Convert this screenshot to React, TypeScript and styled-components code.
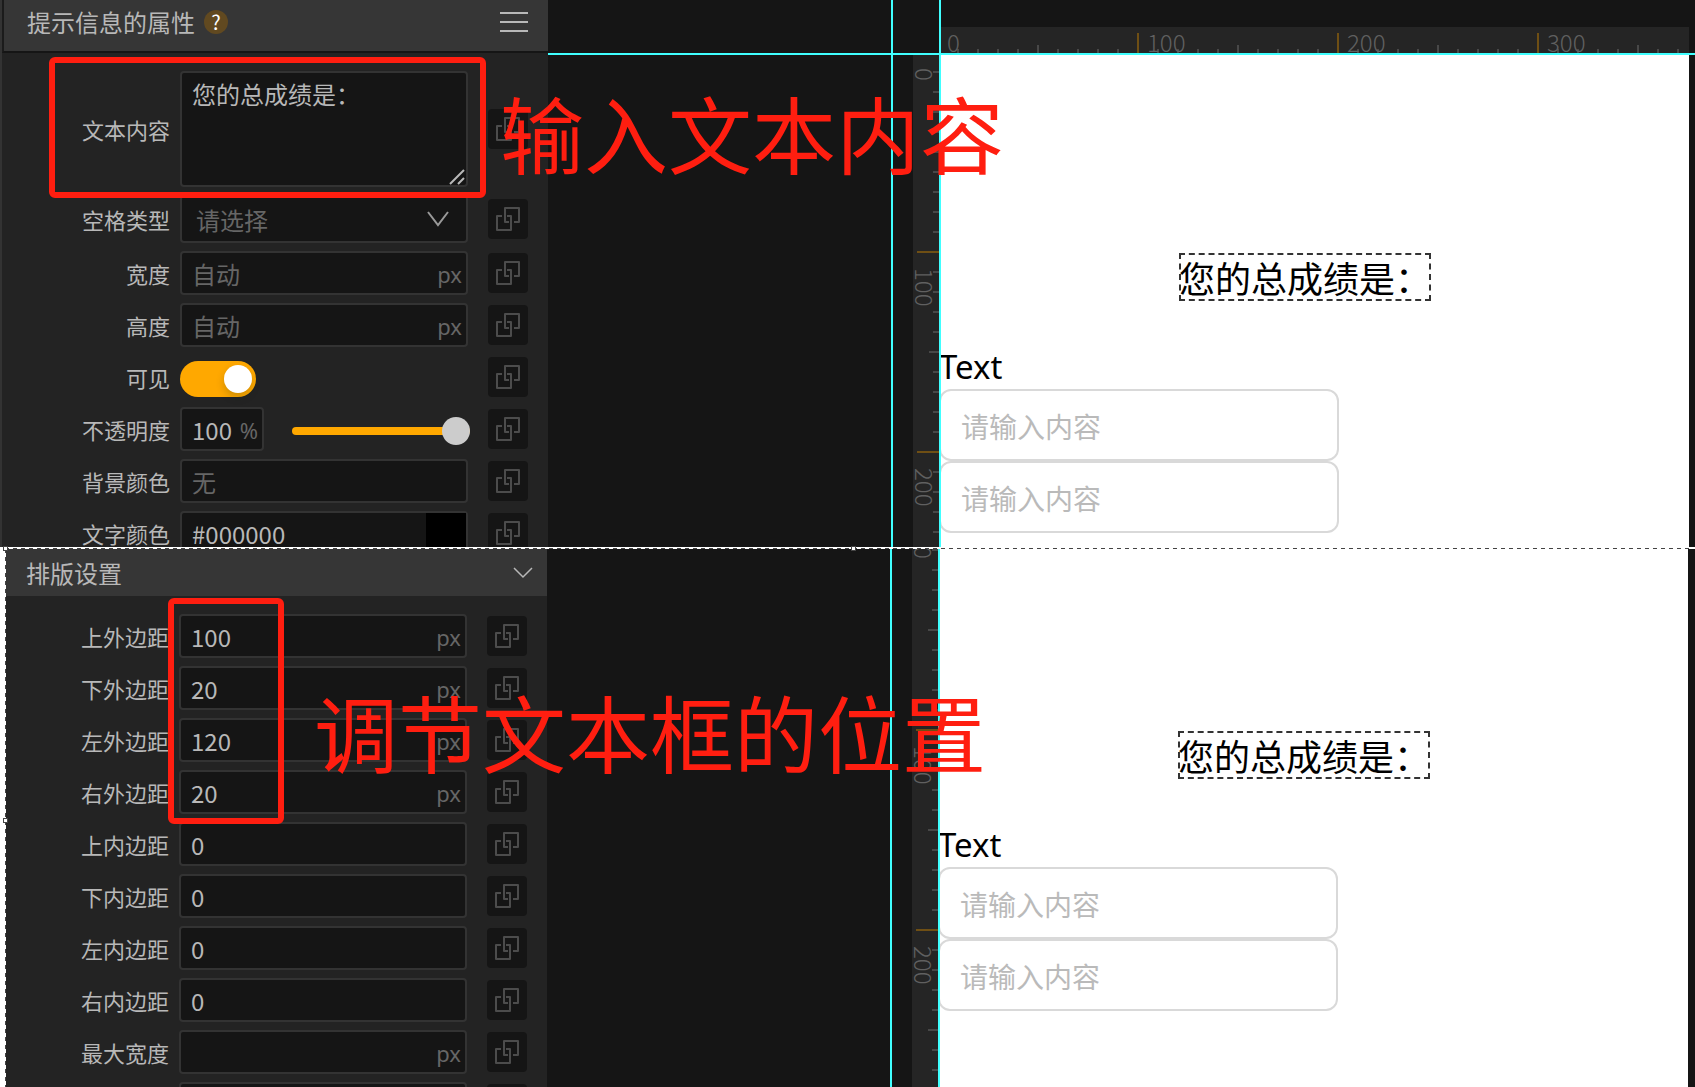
import React from "react";
import styled, { createGlobalStyle } from "styled-components";

const CJK = `"Noto Sans CJK SC", "Noto Sans", sans-serif`;
const LATIN = `"Noto Sans", "Noto Sans CJK SC", sans-serif`;

const GlobalStyle = createGlobalStyle`
  *, *::before, *::after { box-sizing: border-box; }
  html, body { margin: 0; background: #fff; }
  body, input, textarea, select, button { font-family: ${CJK}; }
`;

const Page = styled.main`
  position: relative;
  display: flex;
  flex-direction: column;
  height: 100vh;
  overflow: hidden;
`;

const Shot = styled.section<{ $height?: number }>`
  display: flex;
  flex: ${(p) => (p.$height ? `0 0 ${p.$height}px` : "1 1 0")};
  min-height: 0;
  overflow: hidden;
`;

/* ---------- property panel ---------- */

const Sidebar = styled.aside<{ $cropped?: boolean }>`
  flex: 0 0 ${(p) => (p.$cropped ? 547 : 548)}px;
  display: flex;
  padding-left: ${(p) => (p.$cropped ? 5 : 2)}px;
  background: ${(p) => (p.$cropped ? "#fff" : "#333")};
`;

const CropEdge = styled.div`
  flex: 0 0 1px;
  background: repeating-linear-gradient(to bottom, #444 0 4px, #fff 4px 8px);
`;

const PanelColumn = styled.div`
  flex: 1;
  min-width: 0;
  background: #232323;
`;

const PanelHeader = styled.header<{ $compact?: boolean }>`
  display: flex;
  align-items: center;
  gap: 9px;
  height: ${(p) => (p.$compact ? 47 : 53)}px;
  padding: ${(p) => (p.$compact ? "0 14px 0 20px" : "0 20px 8px 23px")};
  border-left: ${(p) => (p.$compact ? "0" : "2px solid #1b1b1b")};
  border-bottom: ${(p) => (p.$compact ? "0" : "2px solid #151515")};
  background: #363636;
`;

const PanelTitle = styled.h2`
  margin: 0;
  font-size: 24px;
  line-height: 32px;
  font-weight: 400;
  color: #b8b8b8;
`;

const HelpButton = styled.button`
  width: 24px;
  height: 24px;
  padding: 0;
  border: 0;
  border-radius: 50%;
  background: #614920;
  color: #fff;
  font-size: 20px;
  line-height: 24px;
`;

const HeaderButton = styled.button`
  display: flex;
  margin-left: auto;
  padding: 0;
  border: 0;
  background: none;
  color: #b8b8b8;
`;

const PanelBody = styled.div`
  display: flex;
  flex-direction: column;
  gap: 8px;
  padding: 18px 20px 0 0;
`;

const Row = styled.div`
  display: flex;
  align-items: center;
  min-height: 44px;
`;

const RowLabel = styled.label`
  flex: 1;
  min-width: 0;
  padding-right: 10px;
  text-align: right;
  white-space: nowrap;
  font-size: 22px;
  line-height: 32px;
  color: #b8b8b8;
`;

const Control = styled.div`
  display: flex;
  align-items: center;
  flex: 0 0 288px;
  width: 288px;
  min-width: 0;
  margin-right: 20px;
`;

const FieldBox = styled.div<{ $narrow?: boolean; $height?: number }>`
  position: relative;
  display: flex;
  align-items: center;
  flex: ${(p) => (p.$narrow ? "0 0 84px" : "1 1 0")};
  min-width: 0;
  height: ${(p) => p.$height ?? 44}px;
  border: 2px solid #333;
  border-radius: 4px;
  background: #151515;
  color: #666;
`;

const TextField = styled.input`
  flex: 1 1 0;
  width: 0;
  min-width: 0;
  height: 40px;
  padding: 0 0 0 10px;
  border: 0;
  outline: 0;
  background: none;
  font-size: 24px;
  color: #b8b8b8;
  &::placeholder { color: #666; opacity: 1; }
`;

const Unit = styled.span`
  padding: 2px 4px 0 0;
  font-family: ${LATIN};
  font-size: 22px;
  line-height: 32px;
`;

const TextBlock = styled.textarea`
  display: block;
  flex: 1 1 0;
  width: 0;
  min-width: 0;
  height: 112px;
  padding: 5px 10px;
  border: 0;
  outline: 0;
  resize: none;
  background: none;
  font-size: 24px;
  line-height: 32px;
  color: #b8b8b8;
`;

const ResizeGrip = styled.svg`
  position: absolute;
  right: 1px;
  bottom: 0;
`;

const SelectField = styled.select`
  flex: 1;
  height: 40px;
  padding: 0 14px;
  border: 0;
  outline: 0;
  appearance: none;
  background: none;
  font-size: 24px;
  color: #666;
`;

const SelectArrow = styled.svg`
  position: absolute;
  right: 17px;
  pointer-events: none;
`;

const Switch = styled.input`
  appearance: none;
  display: flex;
  align-items: center;
  justify-content: flex-end;
  width: 76px;
  height: 36px;
  margin: 4px 0 0;
  padding: 4px;
  border-radius: 18px;
  background: #ffa800;
  &::before {
    content: "";
    width: 28px;
    height: 28px;
    border-radius: 50%;
    background: #fff;
    box-shadow: 0 4px 8px rgba(0, 35, 11, 0.2);
  }
`;

const Slider = styled.input`
  appearance: none;
  flex: 0 0 178px;
  height: 28px;
  margin: 4px 0 0 28px;
  background: none;
  &::-webkit-slider-runnable-track {
    height: 8px;
    border-radius: 4px;
    background: #ffa800;
  }
  &::-webkit-slider-thumb {
    appearance: none;
    width: 28px;
    height: 28px;
    margin-top: -10px;
    border-radius: 50%;
    background: #ccc;
  }
`;

const Swatch = styled.button`
  flex: 0 0 40px;
  height: 40px;
  padding: 0;
  border: 0;
  background: #000;
`;

const LinkButton = styled.button`
  flex: 0 0 40px;
  height: 40px;
  padding: 0;
  border: 0;
  border-radius: 4px;
  background: #151515;
  color: #4c4c4c;
`;

/* ---------- workspace ---------- */

const Workspace = styled.div`
  position: relative;
  flex: 1;
  min-width: 0;
  display: flex;
  flex-direction: column;
  background: #151515;
`;

const RulerRow = styled.div`
  display: flex;
  align-items: flex-end;
  height: 53px;
  padding: 0 6px 0 391px;
`;

const TopRuler = styled.div`
  flex: 1;
  height: 26px;
  overflow: hidden;
  background: #252525;
`;

const StageRow = styled.div<{ $edge: number }>`
  flex: 1;
  display: flex;
  min-height: 0;
  padding: 0 ${(p) => p.$edge}px 0 365px;
`;

const SideRuler = styled.div`
  flex: 0 0 26px;
  overflow: hidden;
  background: #252525;
`;

const RulerText = styled.text`
  font-family: ${CJK};
  font-size: 24px;
  font-weight: 300;
  fill: #606060;
`;

const Canvas = styled.div<{ $scroll: number }>`
  flex: 1;
  min-width: 0;
  overflow: hidden;
  padding-top: ${(p) => 200 - p.$scroll}px;
  background: #fff;
`;

const SelectedText = styled.p`
  width: max-content;
  margin: 0 40px 44px 240px;
  outline: 2px dashed #333;
  outline-offset: -2px;
  font-size: 36px;
  line-height: 48px;
  color: #000;
`;

const PlainText = styled.p`
  margin: 0;
  font-family: ${LATIN};
  font-size: 33px;
  line-height: 44px;
  color: #000;
`;

const PreviewInput = styled.input`
  display: block;
  width: 400px;
  height: 72px;
  padding: 2px 20px 0;
  border: 2px solid #d9d9d9;
  border-radius: 12px;
  outline: 0;
  background: #fff;
  font-size: 28px;
  &::placeholder { color: #bababa; opacity: 1; }
`;

const VerticalGuide = styled.div<{ $left: number }>`
  position: absolute;
  top: 0;
  bottom: 0;
  left: ${(p) => p.$left}px;
  width: 2px;
  background: #40ffff;
`;

const HorizontalGuide = styled.div`
  position: absolute;
  top: 53px;
  left: 0;
  right: 0;
  height: 2px;
  background: #40ffff;
`;

/* ---------- seam and annotations ---------- */

const Seam = styled.div`
  flex: 0 0 2px;
  padding: 1px 3px 0 5px;
  background: #fff;
  &::after {
    content: "";
    display: block;
    height: 1px;
    background: repeating-linear-gradient(to right, #444 0 4px, #fff 4px 8px);
  }
`;

const Handle = styled.span<{ $x: number; $y: number }>`
  position: absolute;
  left: ${(p) => p.$x}px;
  top: ${(p) => p.$y}px;
  width: 5px;
  height: 5px;
  border: 1px solid #444;
  background: #fff;
`;

const Highlight = styled.div<{ $x: number; $y: number; $w: number; $h: number }>`
  position: absolute;
  left: ${(p) => p.$x}px;
  top: ${(p) => p.$y}px;
  width: ${(p) => p.$w}px;
  height: ${(p) => p.$h}px;
  border: 6px solid #ff1e10;
  border-radius: 6px;
  pointer-events: none;
`;

const Callout = styled.p<{ $x: number; $y: number }>`
  position: absolute;
  left: ${(p) => p.$x}px;
  top: ${(p) => p.$y}px;
  margin: 0;
  font-size: 84px;
  line-height: 100px;
  white-space: nowrap;
  color: #ff1e10;
  pointer-events: none;
`;

function LinkIcon() {
  return (
    <svg width="40" height="40" viewBox="0 0 40 40" fill="none" stroke="currentColor" strokeWidth="2" strokeLinejoin="round">
      <path d="M14 17H9V31H23V17H19" />
      <path d="M21 23H17V9H31V23H26" />
    </svg>
  );
}

function PropertyRow(props: { id: string; label: string; children: React.ReactNode }) {
  return (
    <Row>
      <RowLabel htmlFor={props.id}>{props.label}</RowLabel>
      <Control>{props.children}</Control>
      <LinkButton type="button" aria-label={`绑定${props.label}`}>
        <LinkIcon />
      </LinkButton>
    </Row>
  );
}

function InputRow(props: { id: string; label: string; value?: string; placeholder?: string; unit?: string }) {
  return (
    <PropertyRow id={props.id} label={props.label}>
      <FieldBox>
        <TextField id={props.id} defaultValue={props.value} placeholder={props.placeholder} />
        {props.unit && <Unit>{props.unit}</Unit>}
      </FieldBox>
    </PropertyRow>
  );
}

const TICKS = Array.from({ length: 60 }, (_, i) => i + 1);
const MARKS = [0, 1, 2, 3, 4, 5];

function tickLength(n: number, major: number) {
  if (n % 10 === 0) return major;
  return n % 5 === 0 ? 8 : 4;
}

function tickColor(n: number) {
  return n % 10 === 0 ? "#6f4f14" : "#484848";
}

function HorizontalRuler() {
  return (
    <TopRuler>
      <svg width="100%" height="26">
        {TICKS.map((n) => {
          const len = tickLength(n, 20);
          return <rect key={n} x={n * 20 - 2} y={26 - len} width="2" height={len} fill={tickColor(n)} />;
        })}
        {MARKS.slice(0, 4).map((m) => (
          <RulerText key={m} x={m * 200 + 8} y="25">{m * 100}</RulerText>
        ))}
      </svg>
    </TopRuler>
  );
}

function VerticalRuler({ scroll }: { scroll: number }) {
  return (
    <SideRuler>
      <svg width="26" height="1200">
        <g transform={`translate(0 ${-scroll})`}>
          {TICKS.map((n) => {
            const len = tickLength(n, 20) + 2;
            return <rect key={n} x={26 - len} y={n * 20 - 2} width={len} height="2" fill={tickColor(n)} />;
          })}
          {MARKS.slice(0, 3).map((m) => (
            <RulerText key={m} transform={`translate(2 ${m * 200 + 15}) rotate(90)`}>{m * 100}</RulerText>
          ))}
        </g>
      </svg>
    </SideRuler>
  );
}

function Stage({ scroll = 0, ruler }: { scroll?: number; ruler?: boolean }) {
  return (
    <Workspace>
      {ruler && (
        <RulerRow>
          <HorizontalRuler />
        </RulerRow>
      )}
      <StageRow $edge={ruler ? 6 : 7}>
        <VerticalRuler scroll={scroll} />
        <Canvas $scroll={scroll}>
          <SelectedText>您的总成绩是：</SelectedText>
          <PlainText>Text</PlainText>
          <PreviewInput placeholder="请输入内容" aria-label="请输入内容" />
          <PreviewInput placeholder="请输入内容" aria-label="请输入内容" />
        </Canvas>
      </StageRow>
      <VerticalGuide $left={343} />
      <VerticalGuide $left={391} />
      {ruler && <HorizontalGuide />}
    </Workspace>
  );
}

const LAYOUT_ROWS = [
  { id: "mt", label: "上外边距", value: "100", unit: "px" },
  { id: "mb", label: "下外边距", value: "20", unit: "px" },
  { id: "ml", label: "左外边距", value: "120", unit: "px" },
  { id: "mr", label: "右外边距", value: "20", unit: "px" },
  { id: "pt", label: "上内边距", value: "0" },
  { id: "pb", label: "下内边距", value: "0" },
  { id: "pl", label: "左内边距", value: "0" },
  { id: "pr", label: "右内边距", value: "0" },
  { id: "maxw", label: "最大宽度", value: "", unit: "px" },
];

export default function App() {
  return (
    <>
      <GlobalStyle />
      <Page>
        <Shot $height={547}>
          <Sidebar>
            <PanelColumn>
              <PanelHeader>
                <PanelTitle>提示信息的属性</PanelTitle>
                <HelpButton type="button">?</HelpButton>
                <HeaderButton type="button" aria-label="菜单">
                  <svg width="28" height="22" fill="currentColor">
                    <path d="M0 1h28v2H0zM0 10h28v2H0zM0 19h28v2H0z" />
                  </svg>
                </HeaderButton>
              </PanelHeader>
              <PanelBody>
                <PropertyRow id="content" label="文本内容">
                  <FieldBox $height={116}>
                    <TextBlock id="content" defaultValue="您的总成绩是：" />
                    <ResizeGrip width="16" height="16" stroke="#b8b8b8" strokeWidth="2">
                      <path d="M1 15L15 1M9 15L15 9" />
                    </ResizeGrip>
                  </FieldBox>
                </PropertyRow>
                <PropertyRow id="space" label="空格类型">
                  <FieldBox $height={48}>
                    <SelectField id="space" defaultValue="">
                      <option value="">请选择</option>
                    </SelectField>
                    <SelectArrow width="22" height="16" fill="none" stroke="#999" strokeWidth="2">
                      <path d="M1 1L11 14L21 1" />
                    </SelectArrow>
                  </FieldBox>
                </PropertyRow>
                <InputRow id="width" label="宽度" placeholder="自动" unit="px" />
                <InputRow id="height" label="高度" placeholder="自动" unit="px" />
                <PropertyRow id="visible" label="可见">
                  <Switch id="visible" type="checkbox" role="switch" defaultChecked />
                </PropertyRow>
                <PropertyRow id="opacity" label="不透明度">
                  <FieldBox $narrow>
                    <TextField id="opacity" defaultValue="100" />
                    <Unit>%</Unit>
                  </FieldBox>
                  <Slider type="range" min="0" max="100" defaultValue="100" aria-label="不透明度" />
                </PropertyRow>
                <InputRow id="bg" label="背景颜色" placeholder="无" />
                <PropertyRow id="color" label="文字颜色">
                  <FieldBox>
                    <TextField id="color" defaultValue="#000000" />
                    <Swatch type="button" aria-label="选择颜色" />
                  </FieldBox>
                </PropertyRow>
              </PanelBody>
            </PanelColumn>
          </Sidebar>
          <Stage ruler />
        </Shot>
        <Seam />
        <Shot>
          <Sidebar $cropped>
            <CropEdge />
            <PanelColumn>
              <PanelHeader $compact>
                <PanelTitle>排版设置</PanelTitle>
                <HeaderButton type="button" aria-label="收起">
                  <svg width="20" height="12" fill="none" stroke="currentColor" strokeWidth="1.5">
                    <path d="M1 1L10 10L19 1" />
                  </svg>
                </HeaderButton>
              </PanelHeader>
              <PanelBody>
                {LAYOUT_ROWS.map((row) => (
                  <InputRow key={row.id} {...row} />
                ))}
                <InputRow id="maxh" label="" />
              </PanelBody>
            </PanelColumn>
          </Sidebar>
          <Stage scroll={18} />
        </Shot>
        <Handle $x={3} $y={546} />
        <Handle $x={851} $y={546} />
        <Handle $x={3} $y={818} />
        <Highlight $x={49} $y={57} $w={437} $h={141} />
        <Callout $x={500} $y={82}>输入文本内容</Callout>
        <Highlight $x={168} $y={598} $w={116} $h={226} />
        <Callout $x={314} $y={681}>调节文本框的位置</Callout>
      </Page>
    </>
  );
}
